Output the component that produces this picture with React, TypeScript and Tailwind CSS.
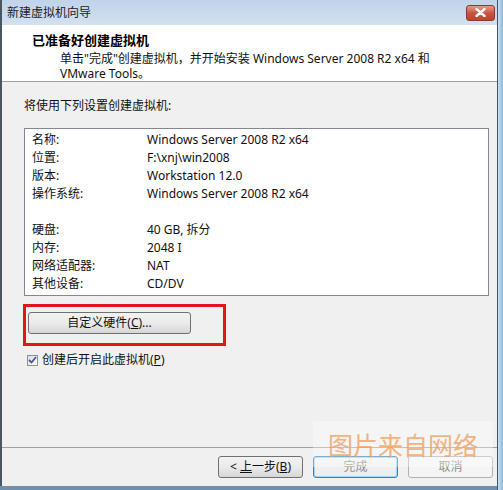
import React from "react";

const font = { fontFamily: '"Noto Sans", "Noto Sans CJK SC", sans-serif' };

const rows: [string, string][] = [
  ["名称:", "Windows Server 2008 R2 x64"],
  ["位置:", "F:\\xnj\\win2008"],
  ["版本:", "Workstation 12.0"],
  ["操作系统:", "Windows Server 2008 R2 x64"],
  ["", ""],
  ["硬盘:", "40 GB, 拆分"],
  ["内存:", "2048 I"],
  ["网络适配器:", "NAT"],
  ["其他设备:", "CD/DV"],
];

function WinButton({ children, variant = "normal" }: { children: React.ReactNode; variant?: "normal" | "default" | "disabled" }) {
  const base = "flex h-[22px] w-[85px] items-center justify-center rounded-[3px] border text-[12px] whitespace-pre";
  if (variant === "default")
    return <div className={`${base} border-[#3c7fb1] bg-gradient-to-b from-[#f2f2f2] to-[#ececec] text-[#8d8d8d] shadow-[inset_0_0_0_1px_#9ed7f2]`}>{children}</div>;
  if (variant === "disabled")
    return <div className={`${base} border-[#adb2b5] bg-[#f4f4f4] text-[#8d8d8d]`}>{children}</div>;
  return <div className={`${base} border-[#707070] bg-gradient-to-b from-[#f2f2f2] via-[#ebebeb] to-[#d6d6d6] text-[#111]`}>{children}</div>;
}

export default function App() {
  return (
    <div className="relative h-[490px] w-[503px] overflow-hidden bg-[#6e8fae]" style={font}>
      <div className="flex h-[486px] w-[497px] flex-col border-l-2 border-[#4b5663] bg-[#f0f0f0]">
        {/* title bar */}
        <div className="flex h-[25px] items-center justify-between bg-gradient-to-b from-[#c0d3e9] to-[#d3e1f0] pl-[5px] pr-[2px]">
          <span className="text-[12px] text-[#1b1b1b]">新建虚拟机向导</span>
          <div className="flex h-[16px] w-[29px] items-center justify-center rounded-[3px] border border-[#8a3a2e] bg-gradient-to-b from-[#e59a89] via-[#c9543f] to-[#c2412d]">
            <svg width="11" height="9" viewBox="0 0 11 9">
              <path d="M1.5 1 L9.5 8 M9.5 1 L1.5 8" stroke="#fff" strokeWidth="2.4" strokeLinecap="round" />
            </svg>
          </div>
        </div>

        {/* header */}
        <div className="h-[57px] border-b border-[#a0a0a0] bg-white pl-[30px] pt-[5px]">
          <div className="text-[13px] font-bold leading-[20px] text-black">已准备好创建虚拟机</div>
          <div className="pl-[28px] pt-[1px] text-[12px] leading-[15px] text-[#111]">
            <div>单击"完成"创建虚拟机，并开始安装 Windows Server 2008 R2 x64 和</div>
            <div>VMware Tools。</div>
          </div>
        </div>

        {/* body */}
        <div className="flex-1 px-[22px] pt-[15px]">
          <div className="text-[12px] leading-[18px] text-[#111]">将使用下列设置创建虚拟机:</div>
          <div className="mt-[13px] h-[168px] w-[465px] border border-[#828790] bg-white px-[7px] pt-[2px]">
            {rows.map(([k, v], i) => (
              <div key={i} className="flex h-[18px] items-center text-[12px] text-[#111]">
                <span className="w-[115px]">{k}</span>
                <span>{v}</span>
              </div>
            ))}
          </div>

          <div className="-ml-[1px] mt-[8px] h-[42px] w-[203px] border-[3px] border-[#e5141c] pl-[2px] pt-[5px]">
            <div className="flex h-[22px] w-[163px] items-center justify-center rounded-[3px] border border-[#707070] bg-gradient-to-b from-[#f2f2f2] via-[#ebebeb] to-[#d6d6d6] text-[12px] text-[#111]">
              自定义硬件(<span className="underline">C</span>)...
            </div>
          </div>

          <div className="mt-[5px] flex items-center gap-[4px] pl-[3px] text-[12px] text-[#111]">
            <div className="flex h-[11px] w-[11px] items-center justify-center border border-[#8e8f8f] bg-gradient-to-br from-[#dcdcdc] to-white">
              <svg width="9" height="8" viewBox="0 0 9 8">
                <path d="M1 4 L3.5 6.5 L8 1" stroke="#3d5a9c" strokeWidth="1.8" fill="none" />
              </svg>
            </div>
            <span>
              创建后开启此虚拟机(<span className="underline">P</span>)
            </span>
          </div>
        </div>

        {/* footer */}
        <div className="h-[39px] border-t border-[#a0a0a0]">
          <div className="flex justify-end gap-[10px] pr-[4px] pt-[8px]">
            <WinButton>
              {"<\u00a0"}
              <span className="underline">上</span>一步(<span className="underline">B</span>)
            </WinButton>
            <WinButton variant="default">完成</WinButton>
            <WinButton variant="disabled">取消</WinButton>
          </div>
        </div>
      </div>

      {/* right frame */}
      <div className="absolute right-0 top-0 h-[490px] w-[6px] border-l border-[#3d5670] bg-gradient-to-r from-[#c9e3f5] to-[#8fb6d6]" />

      {/* watermark */}
      <div className="pointer-events-none absolute left-[313px] top-[421px] flex h-[46px] w-[180px] items-center justify-center bg-white/35">
        <span
          className="whitespace-nowrap text-[25px] leading-none text-[#f0a060]/80"
          style={{ fontFamily: '"Noto Sans CJK SC", sans-serif' }}
        >
          图片来自网络
        </span>
      </div>
    </div>
  );
}
